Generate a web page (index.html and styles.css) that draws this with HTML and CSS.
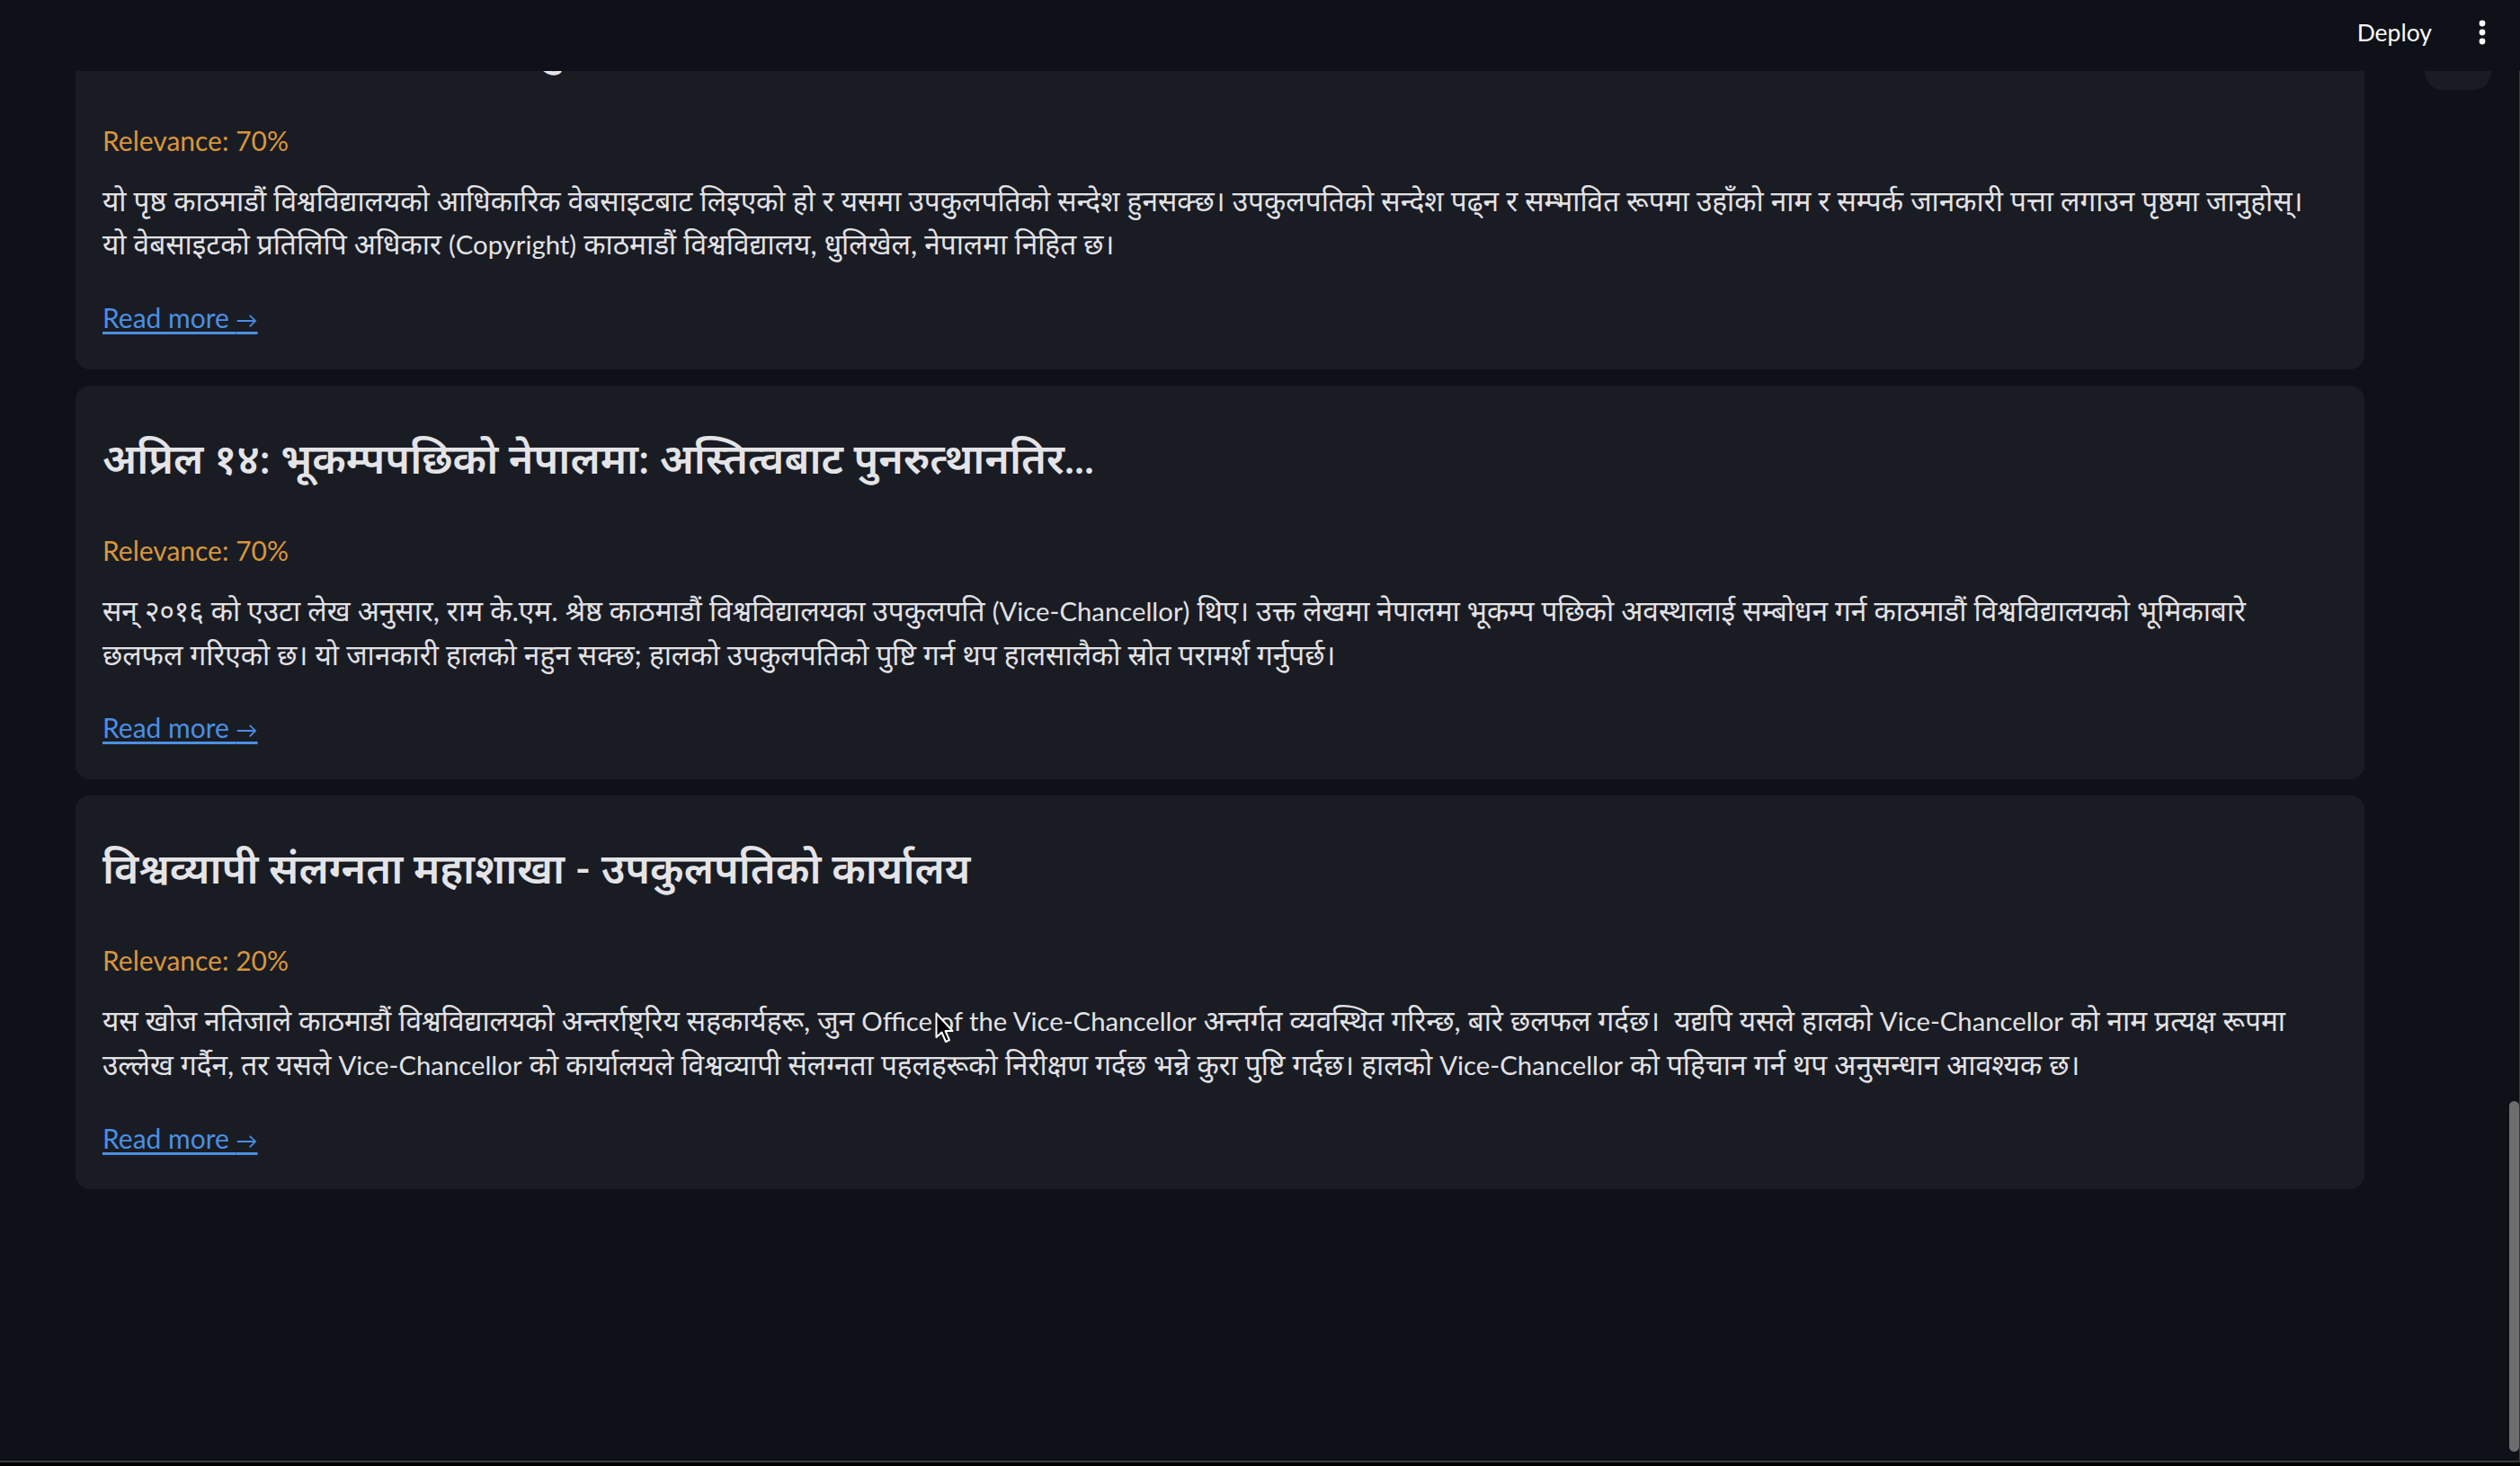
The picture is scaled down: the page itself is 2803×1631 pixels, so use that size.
FILE: index.html
```html
<!DOCTYPE html>
<html lang="ne">
<head>
<meta charset="utf-8">
<title>Search results</title>
<link rel="stylesheet" href="styles.css">
</head>
<body>
<header class="app-header">
  <button class="deploy">Deploy</button>
  <button class="kebab" aria-label="Main menu">
    <svg width="8" height="28" viewBox="0 0 8 28"><circle cx="4" cy="4" r="3.4" fill="#fafafa"/><circle cx="4" cy="14" r="3.4" fill="#fafafa"/><circle cx="4" cy="24" r="3.4" fill="#fafafa"/></svg>
  </button>
</header>

<main class="viewport">
  <div class="block">
    <section class="card">
      <h3 class="title">काठमाडौं विश्वविद्यालय | उपकुलपतिको सन्देश</h3>
      <div class="relevance">Relevance: 70%</div>
      <p class="summary">यो पृष्ठ काठमाडौं विश्वविद्यालयको आधिकारिक वेबसाइटबाट लिइएको हो र यसमा उपकुलपतिको सन्देश हुनसक्छ। उपकुलपतिको सन्देश पढ्न र सम्भावित रूपमा उहाँको नाम र सम्पर्क जानकारी पत्ता लगाउन पृष्ठमा जानुहोस्। यो वेबसाइटको प्रतिलिपि अधिकार <span class="en">(Copyright)</span> काठमाडौं विश्वविद्यालय, धुलिखेल, नेपालमा निहित छ।</p>
      <a class="more" href="#">Read more <span class="arrow">→</span></a>
    </section>

    <section class="card">
      <h3 class="title">अप्रिल १४: भूकम्पपछिको नेपालमा: अस्तित्वबाट पुनरुत्थानतिर...</h3>
      <div class="relevance">Relevance: 70%</div>
      <p class="summary">सन् २०१६ को एउटा लेख अनुसार, राम के.एम. श्रेष्ठ काठमाडौं विश्वविद्यालयका उपकुलपति <span class="en">(Vice-Chancellor)</span> थिए। उक्त लेखमा नेपालमा भूकम्प पछिको अवस्थालाई सम्बोधन गर्न काठमाडौं विश्वविद्यालयको भूमिकाबारे छलफल गरिएको छ। यो जानकारी हालको नहुन सक्छ; हालको उपकुलपतिको पुष्टि गर्न थप हालसालैको स्रोत परामर्श गर्नुपर्छ।</p>
      <a class="more" href="#">Read more <span class="arrow">→</span></a>
    </section>

    <section class="card">
      <h3 class="title">विश्वव्यापी संलग्नता महाशाखा - उपकुलपतिको कार्यालय</h3>
      <div class="relevance">Relevance: 20%</div>
      <p class="summary">यस खोज नतिजाले काठमाडौं विश्वविद्यालयको अन्तर्राष्ट्रिय सहकार्यहरू, जुन <span class="en">Office of the Vice-Chancellor</span> अन्तर्गत व्यवस्थित गरिन्छ, बारे छलफल गर्दछ।&nbsp; यद्यपि यसले हालको <span class="en">Vice-Chancellor</span> को नाम प्रत्यक्ष रूपमा उल्लेख गर्दैन, तर यसले <span class="en">Vice-Chancellor</span> को कार्यालयले विश्वव्यापी संलग्नता पहलहरूको निरीक्षण गर्दछ भन्ने कुरा पुष्टि गर्दछ। हालको <span class="en">Vice-Chancellor</span> को पहिचान गर्न थप अनुसन्धान आवश्यक छ।</p>
      <a class="more" href="#">Read more <span class="arrow">→</span></a>
    </section>
  </div>
  <div class="side-tab"></div>
</main>

<div class="scrollbar"><div class="thumb"></div></div>
<div class="window-edge"></div>

<svg class="cursor" width="22" height="36" viewBox="0 0 22 36"><path d="M1.5 1.5 L1.5 28 L7.5 22.5 L12 33 L16 31.2 L11.6 21 L19.5 21 Z" fill="#000" stroke="#fff" stroke-width="2" stroke-linejoin="round"/></svg>
</body>
</html>
```
FILE: styles.css
```css
html, body {
  margin: 0;
  padding: 0;
}
body {
  background: #0e1117;
  color: #fafafa;
  font-family: "Source Sans Pro", Lato, "Noto Sans Devanagari", "Noto Sans", sans-serif;
  height: 1631px;
  overflow: hidden;
  position: relative;
}

.app-header {
  position: fixed;
  top: 0;
  left: 0;
  right: 0;
  height: 79px;
  background: #0e1117;
  display: flex;
  align-items: center;
  justify-content: flex-end;
  padding-right: 38px;
  gap: 52px;
  z-index: 10;
}
.deploy {
  background: none;
  border: 0;
  color: #fafafa;
  font-family: inherit;
  font-size: 26.5px;
  padding: 0;
  margin-top: -8px;
}
.kebab {
  background: none;
  border: 0;
  padding: 0;
  display: flex;
  margin-top: -8px;
}

.viewport {
  height: 1631px;
  overflow: hidden;
  position: relative;
  padding: 0 173px 0 84px;
}
.block {
  margin-top: -27px;
  display: flex;
  flex-direction: column;
  gap: 18px;
}

.card {
  background: #1a1c24;
  border-radius: 16px;
  padding: 52px 40px 0 30px;
  height: 438px;
  box-sizing: border-box;
}
.title {
  margin: 0;
  font-size: 46.6px;
  font-weight: 600;
  line-height: 56px;
  color: #e4e4e7;
}
.relevance {
  margin-top: 51px;
  font-size: 30px;
  line-height: 48px;
  color: #d8963c;
}
.summary {
  margin: 19px 0 0;
  font-size: 31.6px;
  line-height: 48px;
  color: #e2e2e4;
}
.summary .en {
  font-size: 29.3px;
}
.more {
  display: inline-block;
  margin-top: 33px;
  font-size: 30px;
  line-height: 48px;
  color: #4b8fe2;
  text-decoration: underline;
  text-underline-offset: 4px;
}
.more .arrow {
  font-size: 24px;
}

.side-tab {
  position: absolute;
  top: 60px;
  left: 2697px;
  width: 74px;
  height: 40px;
  background: #1a1c24;
  border-radius: 0 0 20px 20px;
}

.scrollbar {
  position: fixed;
  top: 0;
  right: 0;
  width: 13px;
  height: 1625px;
  border-right: 1px solid #3a3b40;
  box-sizing: border-box;
}
.thumb {
  position: absolute;
  top: 1225px;
  left: 1px;
  width: 11px;
  height: 390px;
  background: #6d6d6f;
  border-radius: 6px;
}
.window-edge {
  position: fixed;
  left: 0;
  right: 0;
  bottom: 0;
  height: 6px;
  background: #000;
  border-top: 2px solid #3c3c3e;
  box-sizing: border-box;
}
.cursor {
  position: absolute;
  left: 1040px;
  top: 1126px;
  z-index: 20;
}
```
